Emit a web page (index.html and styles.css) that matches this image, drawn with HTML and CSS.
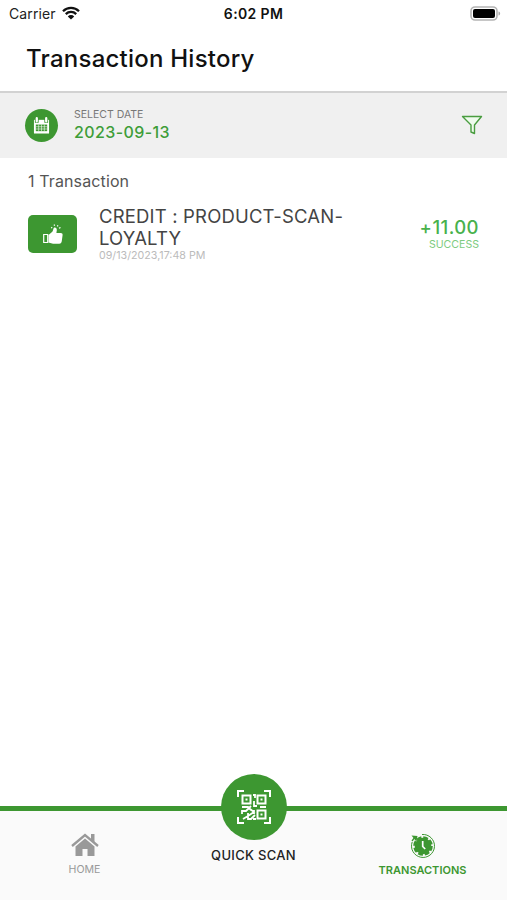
FILE: index.html
```html
<!DOCTYPE html>
<html lang="en">

<head>
  <meta charset="UTF-8">
  <meta name="viewport" content="width=device-width, initial-scale=1.0">
  <title>Transaction History</title>
  <link rel="stylesheet" href="styles.css">
</head>

<body>

  <header class="header">
    <div class="status-bar">
      <div class="carrier">
        <span>Carrier</span>
        <svg class="wifi" viewBox="0 0 18 14">
          <path d="M1 5.2a11.4 11.4 0 0 1 16 0M3.8 8.1a7.4 7.4 0 0 1 10.4 0" fill="none" stroke="#111" stroke-width="2.3" />
          <path d="M9 13.6l-3.2-3.2a4.6 4.6 0 0 1 6.4 0z" fill="#111" />
        </svg>
      </div>
      <span class="time">6:02 PM</span>
      <div class="battery-box">
        <svg class="battery" viewBox="0 0 31 15">
          <rect x="1" y="1" width="26" height="13" rx="4" fill="#fff" stroke="#b4b4b4" stroke-width="1.6" />
          <rect x="3" y="3" width="22" height="9" rx="2" fill="#000" />
          <path d="M28.5 5.5c2.2.8 2.2 3.2 0 4z" fill="#aaa" />
        </svg>
      </div>
    </div>
    <h1>Transaction History</h1>
  </header>

  <section class="date-bar">
    <div class="date-icon">
      <svg viewBox="0 0 18 18">
        <path d="M1 3h16v14.500H1z" fill="#fff" />
        <path d="M4 0v6M14 0v6" stroke="#3d9731" stroke-width="4" />
        <path d="M4 1.200v3.300M14 1.200v3.300" stroke="#fff" stroke-width="2.400" stroke-linecap="round" />
        <path d="M3 8h12v7H3z" fill="#3d9731" />
        <path d="M3 10.300h12M3 12.700h12M6 8v7M9 8v7M12 8v7" stroke="#fff" stroke-width=".6" />
      </svg>
    </div>
    <div class="date-text">
      <span class="label">SELECT DATE</span>
      <span class="date">2023-09-13</span>
    </div>
    <svg class="filter" viewBox="0 0 22 20">
      <path d="M1.500 1.500h19l-7 8.500v8.500l-3.500-1.500v-7z" fill="#effbed" stroke="#4a9d40" stroke-width="1.400" stroke-linejoin="round" />
    </svg>
  </section>

  <main class="content">
    <p class="count">1 Transaction</p>
    <div class="transaction">
      <div class="thumb">
        <svg viewBox="0 0 22 22">
          <path d="M1.700 11.500h4v8h-4z" fill="none" stroke="#fff" stroke-width="1.200" />
          <path d="M6.500 12l3.800-3.200c1-1 .8-3.700 2-4.200 1.500-.5 2.700.9 2.500 2.600L14.400 10h4.200c1.600 0 2.100.9 2 2.100l-.8 6c-.2 1.700-1 2.600-2.600 2.600h-6.200l-4.500-1.200z" fill="#fff" />
          <path d="M9.300 4.200l.8.900M12.400 1.500v1.300M16 2.300l-.7 1M18.500 4.500l-1.500.8" stroke="#fff" stroke-width="1.300" />
        </svg>
      </div>
      <div class="details">
        <span class="name">CREDIT : PRODUCT-SCAN-<br>LOYALTY</span>
        <span class="when">09/13/2023,17:48 PM</span>
      </div>
      <div class="amount">
        <span class="value">+11.00</span>
        <span class="status">SUCCESS</span>
      </div>
    </div>
  </main>

  <nav class="tab-bar">
    <a class="tab">
      <svg class="home-icon" viewBox="0 0 28 24">
        <path d="M1 13L14 2l13 11" fill="none" stroke="#999" stroke-width="2.300" />
        <path d="M20 1h3.500v9L20 7z" fill="#999" />
        <path d="M4.500 13.500L14 5.500l9.500 8V23h-7v-7h-5v7h-7z" fill="#999" />
      </svg>
      <span>HOME</span>
    </a>
    <a class="tab scan">
      <div class="scan-button">
        <svg viewBox="0 0 34 34" fill="none" stroke="#fff" stroke-width="2">
          <path d="M1 7V1h6M27 1h6v6M33 27v6h-6M7 33H1v-6" />
          <path d="M5.500 5.500h8v8h-8zM20.500 5.500h8v8h-8zM20.500 20.500h8v8h-8z" />
          <path d="M8.500 9.500h2M23.500 9.500h2M23.500 24.500h2" />
          <path d="M16 5h2v3M17 11v5h3M5 17h6l3 3M23 17h6M14 16l-5 5H5v3M13 19l4 3-6 4-5 3M11 23v6h3l4-4M17 20v4M16 29h3" stroke-width="1.800" />
        </svg>
      </div>
      <span>QUICK SCAN</span>
    </a>
    <a class="tab active">
      <svg class="clock-icon" viewBox="0 0 26 26">
        <path d="M12 1.500A11.500 11.500 0 1 1 2.200 9" fill="none" stroke="#3d9731" stroke-width="1" />
        <path d="M1.500 2.500l6 .5-1 5.500-1.800-2z" fill="#3d9731" />
        <path d="M2 8l3-4" stroke="#3d9731" stroke-width="1.300" />
        <circle cx="13" cy="13" r="8.300" fill="#3d9731" />
        <circle cx="13" cy="13" r="8.300" fill="none" stroke="#3d9731" stroke-width="3" stroke-dasharray="4.700 1.820" />
        <path d="M12.700 8v5.500l2.500 2.500" fill="none" stroke="#fff" stroke-width="1.700" />
      </svg>
      <span>TRANSACTIONS</span>
    </a>
  </nav>

</body>

</html>
```
FILE: styles.css
```css
* {
  box-sizing: border-box;
}

body {
  margin: 0;
  height: 900px;
  display: flex;
  flex-direction: column;
  font-family: Inter, "Liberation Sans", sans-serif;
  background-color: #fff;
  overflow: hidden;
}

svg {
  display: block;
}

.header {
  height: 93px;
  border-bottom: 2px solid #d2d2d2;
}

.status-bar {
  display: grid;
  grid-template-columns: 1fr auto 1fr;
  align-items: center;
  height: 27px;
  padding: 0 6px 0 9px;
  font-size: 14px;
  color: #222;
}

.carrier {
  display: flex;
  align-items: center;
  gap: 6px;
  letter-spacing: 0.1px;
}

.wifi {
  width: 18px;
  height: 14px;
  margin-top: -2px;
}

.time {
  margin-right: 3px;
  font-size: 14px;
  font-weight: 600;
  letter-spacing: 0.35px;
  color: #111;
}

.battery-box {
  display: flex;
  justify-content: flex-end;
}

.battery {
  width: 31px;
  height: 15px;
  margin-top: -1px;
}

h1 {
  margin: 0;
  padding-left: 26px;
  font-size: 24px;
  line-height: 64px;
  font-weight: 500;
  letter-spacing: 0.23px;
  color: #111;
}

.date-bar {
  display: flex;
  align-items: center;
  height: 65px;
  padding: 0 24px 1px 25px;
  background-color: #f0f0f0;
}

.date-icon {
  display: flex;
  align-items: center;
  justify-content: center;
  width: 33px;
  height: 33px;
  border-radius: 50%;
  background-color: #3d9731;
}

.date-icon svg {
  width: 17px;
  height: 17px;
}

.date-text {
  display: flex;
  flex-direction: column;
  flex: 1;
  margin-left: 16px;
  padding-bottom: 2px;
}

.label {
  font-size: 10.5px;
  line-height: 15px;
  color: #777;
}

.date {
  font-size: 16px;
  line-height: 20px;
  font-weight: 500;
  letter-spacing: 0.4px;
  color: #3d9d38;
}

.filter {
  width: 22px;
  height: 20px;
}

.content {
  flex: 1;
  padding: 0 28px;
}

.count {
  margin: 12px 0 0;
  font-size: 16px;
  line-height: 22px;
  letter-spacing: 0.12px;
  color: #555;
}

.transaction {
  display: flex;
  align-items: center;
  margin-top: 13px;
}

.thumb {
  display: flex;
  align-items: center;
  justify-content: center;
  width: 49px;
  height: 38px;
  border-radius: 5px;
  background-color: #3d9731;
}

.thumb svg {
  width: 22px;
  height: 22px;
}

.details {
  display: flex;
  flex-direction: column;
  flex: 1;
  margin-left: 22px;
}

.name {
  font-size: 18.5px;
  line-height: 22px;
  letter-spacing: 0.17px;
  color: #444;
}

.when {
  font-size: 10.7px;
  line-height: 14px;
  color: #bbb;
}

.amount {
  display: flex;
  flex-direction: column;
  align-items: flex-end;
  padding-top: 1px;
}

.value {
  font-size: 18.5px;
  line-height: 20px;
  font-weight: 500;
  letter-spacing: 0.45px;
  color: #48b14c;
}

.status {
  font-size: 10.6px;
  line-height: 16px;
  color: #7dcb80;
}

.tab-bar {
  display: grid;
  grid-template-columns: 1fr 1fr 1fr;
  height: 94px;
  border-top: 5px solid #3d9731;
  background-color: #fafafa;
}

.tab {
  display: flex;
  flex-direction: column;
  align-items: center;
  padding-top: 22px;
  font-size: 10.6px;
  line-height: 14px;
  color: #999;
}

.home-icon {
  width: 28px;
  height: 24px;
  margin-bottom: 6px;
}

.clock-icon {
  width: 26px;
  height: 26px;
  margin-bottom: 4px;
}

.scan {
  padding-top: 0;
  font-size: 13px;
  line-height: 16px;
  font-weight: 500;
  letter-spacing: 0.3px;
  color: #222;
}

.scan-button {
  display: flex;
  align-items: center;
  justify-content: center;
  width: 66px;
  height: 66px;
  margin-top: -37px;
  margin-bottom: 7px;
  border-radius: 50%;
  background-color: #3d9731;
}

.scan-button svg {
  width: 34px;
  height: 34px;
}

.active {
  font-size: 11px;
  font-weight: 600;
  color: #3d9731;
}
```
